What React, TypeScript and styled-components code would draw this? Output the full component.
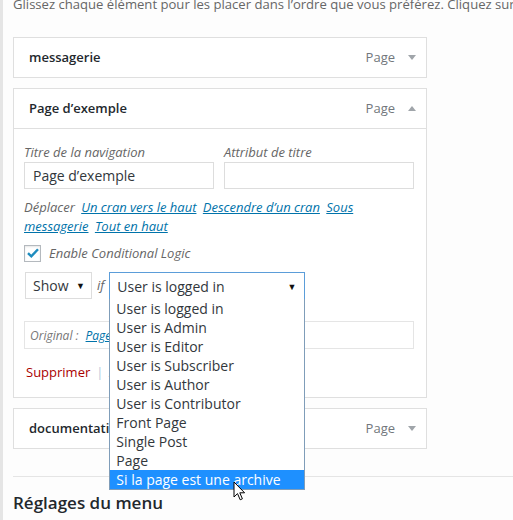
import React from "react";
import styled, { createGlobalStyle } from "styled-components";

const Global = createGlobalStyle`
  html, body { margin: 0; padding: 0; background: #fdfdfd; overflow: hidden; }
  body {
    font-family: "Open Sans", "Liberation Sans", sans-serif;
    font-size: 13px;
    line-height: 19px;
    color: #444;
  }
`;

const Page = styled.div`
  display: flex;
  height: 520px;
  width: 513px;
  overflow: hidden;
`;

const Rail = styled.div`
  width: 3px;
  flex: none;
  background: #e5e5e5;
`;

const Content = styled.div`
  flex: 1;
  padding-left: 10px;
  min-width: 0;
  position: relative;
`;

const Intro = styled.p`
  margin: -5px 0 23px;
  white-space: nowrap;
  font-size: 13.1px;
  color: #666;
`;

const ItemList = styled.div`
  display: flex;
  flex-direction: column;
  gap: 10px;
  width: 414px;
`;

const Item = styled.div`
  border: 1px solid #dfdfdf;
  background: #fff;
`;

const ItemHead = styled.div<{ $open?: boolean }>`
  display: flex;
  align-items: center;
  height: 39px;
  padding: 0 10px 0 15px;
  ${(p) => (p.$open ? "border-bottom: 1px solid #dfdfdf;" : "")}
`;

const ItemTitle = styled.span`
  flex: 1;
  font-weight: 600;
  color: #23282d;
`;

const ItemType = styled.span`
  color: #72777c;
  margin-right: 13px;
`;

const Arrow = styled.span<{ $up?: boolean }>`
  width: 0;
  height: 0;
  border-left: 4px solid transparent;
  border-right: 4px solid transparent;
  ${(p) =>
    p.$up
      ? "border-bottom: 5px solid #a0a5aa;"
      : "border-top: 5px solid #a0a5aa;"}
`;

const Settings = styled.div`
  padding: 14px 12px 15px 10px;
`;

const FieldRow = styled.div`
  display: grid;
  grid-template-columns: 190px 190px;
  gap: 10px;
`;

const Field = styled.label`
  display: flex;
  flex-direction: column;
`;

const Label = styled.span`
  font-style: italic;
  color: #666;
`;

const TextInput = styled.div`
  box-sizing: border-box;
  height: 27px;
  border: 1px solid #ddd;
  background: #fff;
  padding: 0 8px;
  font-size: 14px;
  line-height: 25px;
  color: #32373c;
`;

const MoveLine = styled.p`
  margin: 9px 0 0;
  color: #666;
  font-style: italic;
  a { margin-left: 3px; }
`;

const Link = styled.a`
  color: #0073aa;
  text-decoration: underline;
  font-style: italic;
`;

const CheckRow = styled.div`
  display: flex;
  align-items: center;
  gap: 8px;
  margin-top: 8px;
  height: 18px;
`;

const CheckBox = styled.span`
  box-sizing: border-box;
  width: 17px;
  height: 17px;
  border: 1px solid #b4b9be;
  background: #fff;
  box-shadow: inset 0 1px 2px rgba(0, 0, 0, 0.1);
  display: flex;
  align-items: center;
  justify-content: center;
`;

const LogicRow = styled.div`
  display: flex;
  align-items: center;
  margin-top: 10px;
  height: 27px;
`;

const SmallSelect = styled.div`
  box-sizing: border-box;
  width: 67px;
  height: 27px;
  margin-left: 1px;
  border: 1px solid #ddd;
  background: #fff;
  display: flex;
  align-items: center;
  justify-content: space-between;
  padding: 0 6px 0 7px;
  font-size: 14px;
  color: #32373c;
`;

const Caret = styled.span`
  font-size: 9px;
  color: #111;
`;

const IfWord = styled.span`
  font-style: italic;
  color: #666;
  margin: 0 5px 0 5px;
`;

const SelectWrap = styled.div`
  position: relative;
  width: 196px;
  height: 27px;
  z-index: 2;
`;

const SelectBox = styled.div`
  box-sizing: border-box;
  height: 28px;
  border: 1px solid #5b9dd9;
  background: #fff;
  display: flex;
  align-items: center;
  justify-content: space-between;
  padding: 0 8px 0 7px;
  font-size: 14px;
  color: #32373c;
`;

const OptionList = styled.ul`
  position: absolute;
  top: 27px;
  left: 0;
  width: 196px;
  box-sizing: border-box;
  margin: 0;
  padding: 0;
  list-style: none;
  background: #fff;
  border: 1px solid #7f9db9;
  border-top: none;
`;

const Option = styled.li<{ $active?: boolean }>`
  height: 19px;
  line-height: 19px;
  padding: 0 6px;
  font-size: 14px;
  white-space: nowrap;
  color: ${(p) => (p.$active ? "#fff" : "#32373c")};
  background: ${(p) => (p.$active ? "#1e90ff" : "transparent")};
`;

const OriginalBox = styled.div`
  box-sizing: border-box;
  margin-top: 22px;
  width: 390px;
  height: 28px;
  border: 1px solid #e5e5e5;
  padding: 0 5px;
  display: flex;
  align-items: center;
  gap: 7px;
  font-size: 12px;
  color: #777;
  font-style: italic;
`;

const Actions = styled.div`
  margin-top: 14px;
  padding-left: 2px;
  display: flex;
  gap: 6px;
  height: 19px;
`;

const Delete = styled.a`
  color: #a00;
`;

const Sep = styled.span`
  color: #b4c9dd;
`;

const Rule = styled.hr`
  margin: 27px 0 0;
  border: 0;
  border-top: 1px solid #e5e5e5;
`;

const Heading = styled.h3`
  margin: 14px 0 0;
  font-size: 17px;
  line-height: 24px;
  font-weight: 600;
  color: #23282d;
`;

const Pointer = styled.svg`
  position: absolute;
  left: 230px;
  top: 481px;
  z-index: 5;
`;

const options = [
  "User is logged in",
  "User is Admin",
  "User is Editor",
  "User is Subscriber",
  "User is Author",
  "User is Contributor",
  "Front Page",
  "Single Post",
  "Page",
  "Si la page est une archive",
];

export default function App() {
  return (
    <>
      <Global />
      <Page>
        <Rail />
        <Content>
          <Intro>
            Glissez chaque élément pour les placer dans l’ordre que vous préférez. Cliquez sur
          </Intro>
          <ItemList>
            <Item>
              <ItemHead>
                <ItemTitle>messagerie</ItemTitle>
                <ItemType>Page</ItemType>
                <Arrow />
              </ItemHead>
            </Item>
            <Item>
              <ItemHead $open>
                <ItemTitle>Page d’exemple</ItemTitle>
                <ItemType>Page</ItemType>
                <Arrow $up />
              </ItemHead>
              <Settings>
                <FieldRow>
                  <Field>
                    <Label>Titre de la navigation</Label>
                    <TextInput>Page d’exemple</TextInput>
                  </Field>
                  <Field>
                    <Label>Attribut de titre</Label>
                    <TextInput />
                  </Field>
                </FieldRow>
                <MoveLine>
                  Déplacer <Link>Un cran vers le haut</Link> <Link>Descendre d’un cran</Link>{" "}
                  <Link>Sous messagerie</Link> <Link>Tout en haut</Link>
                </MoveLine>
                <CheckRow>
                  <CheckBox>
                    <svg width="14" height="12" viewBox="0 0 14 12">
                      <path d="M2 6.2 L5.3 9.4 L12 2.2" fill="none" stroke="#1e8cbe" strokeWidth="2.4" />
                    </svg>
                  </CheckBox>
                  <Label>Enable Conditional Logic</Label>
                </CheckRow>
                <LogicRow>
                  <SmallSelect>
                    Show <Caret>▼</Caret>
                  </SmallSelect>
                  <IfWord>if</IfWord>
                  <SelectWrap>
                    <SelectBox>
                      User is logged in <Caret>▼</Caret>
                    </SelectBox>
                    <OptionList>
                      {options.map((o, i) => (
                        <Option key={o} $active={i === options.length - 1}>
                          {o}
                        </Option>
                      ))}
                    </OptionList>
                  </SelectWrap>
                </LogicRow>
                <OriginalBox>
                  Original :<Link>Page d’exemple</Link>
                </OriginalBox>
                <Actions>
                  <Delete>Supprimer</Delete>
                  <Sep>|</Sep>
                  <Link>Annuler</Link>
                </Actions>
              </Settings>
            </Item>
            <Item>
              <ItemHead>
                <ItemTitle>documentation</ItemTitle>
                <ItemType>Page</ItemType>
                <Arrow />
              </ItemHead>
            </Item>
          </ItemList>
          <Rule />
          <Heading>Réglages du menu</Heading>
          <Pointer width="13" height="21" viewBox="0 0 13 21">
            <path
              d="M1 1 L1 16 L4.5 12.6 L7.2 18.8 L9.4 17.8 L6.8 11.8 L11.6 11.8 Z"
              fill="#fff"
              stroke="#000"
              strokeWidth="1"
              strokeLinejoin="round"
            />
          </Pointer>
        </Content>
      </Page>
    </>
  );
}
